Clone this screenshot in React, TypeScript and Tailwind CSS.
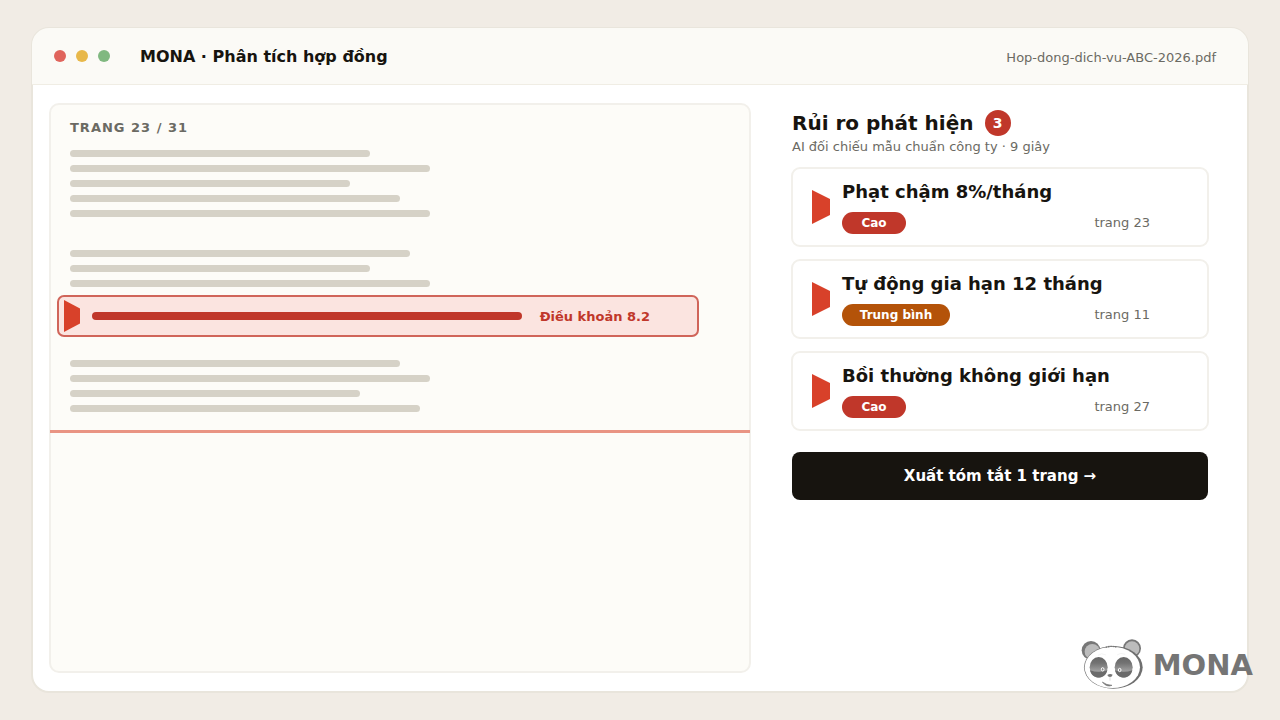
import clsx from "clsx";

type Level = "high" | "medium";

type Risk = {
  title: string;
  level: Level;
  page: number;
};

const risks: Risk[] = [
  { title: "Phạt chậm 8%/tháng", level: "high", page: 23 },
  { title: "Tự động gia hạn 12 tháng", level: "medium", page: 11 },
  { title: "Bồi thường không giới hạn", level: "high", page: 27 },
];

const paragraphs = [
  [300, 360, 280, 330, 360],
  [340, 300, 360],
  [330, 360, 290, 350],
];

function Paragraph({ lines, className }: { lines: number[]; className?: string }) {
  return (
    <div className={clsx("flex flex-col gap-2 px-[19px]", className)}>
      {lines.map((width, i) => (
        <div key={i} className="h-[7px] rounded-full bg-[#d6d2c7]" style={{ width }} />
      ))}
    </div>
  );
}

function Flag({ className }: { className: string }) {
  return (
    <svg viewBox="0 0 18 34" preserveAspectRatio="none" className={className} aria-hidden="true">
      <path d="M0 0 L18 9 V25 L0 34 Z" fill="#d8412a" />
    </svg>
  );
}

function TitleBar() {
  return (
    <header className="-mx-px -mt-px flex h-[57px] items-center rounded-t-[17px] border-b border-[#f0ede4] bg-[#fbfaf6] pr-8 pl-[22px]">
      <div className="flex gap-[10px]">
        <span className="size-3 rounded-full bg-[#e0645c]" />
        <span className="size-3 rounded-full bg-[#e8b84a]" />
        <span className="size-3 rounded-full bg-[#80b880]" />
      </div>
      <h1 className="ml-[30px] pt-[2px] text-base font-bold">MONA · Phân tích hợp đồng</h1>
      <span className="ml-auto pt-[3px] text-[13px] text-[#6b6a63]">Hop-dong-dich-vu-ABC-2026.pdf</span>
    </header>
  );
}

function DocumentPreview() {
  return (
    <section className="rounded-[10px] border-2 border-[#f2f0eb] bg-[#fdfcf8] pt-[13px]">
      <h2 className="px-[19px] text-[13px] leading-5 font-bold tracking-[1px] text-[#6b6a63]">TRANG 23 / 31</h2>
      <Paragraph lines={paragraphs[0]} className="mt-3" />
      <Paragraph lines={paragraphs[1]} className="mt-[33px]" />
      <div className="mt-2 mr-[50px] ml-[6px] flex h-[42px] items-center rounded-[7px] border-2 border-[#d0655a] bg-[#fbe4e0] pr-[47px] pl-[5px]">
        <Flag className="h-8 w-4" />
        <div className="ml-3 h-2 flex-1 rounded-full bg-[#c0372a]" />
        <span className="ml-[18px] pt-[2px] text-[13px] font-bold text-[#c0372a]">Điều khoản 8.2</span>
      </div>
      <Paragraph lines={paragraphs[2]} className="mt-[23px]" />
      <div className="-mx-px mt-[18px] h-[3px] bg-[#e99483]" />
    </section>
  );
}

function LevelBadge({ level }: { level: Level }) {
  return (
    <span
      className={clsx(
        "flex h-[22px] items-center justify-center rounded-full text-xs font-bold text-white",
        level === "high" ? "w-16 bg-[#c0372a]" : "w-[108px] bg-[#b45309]",
      )}
    >
      {level === "high" ? "Cao" : "Trung bình"}
    </span>
  );
}

function RiskCard({ title, level, page }: Risk) {
  return (
    <li className="flex h-20 items-center rounded-[9px] border-2 border-[#f2f0eb] bg-white pr-[57px] pl-[19px]">
      <Flag className="h-[34px] w-[18px]" />
      <div className="ml-3 flex-1">
        <h3 className="text-lg leading-6 font-bold">{title}</h3>
        <div className="mt-2 flex items-center justify-between">
          <LevelBadge level={level} />
          <span className="text-[13px] leading-5 text-[#6b6a63]">trang {page}</span>
        </div>
      </div>
    </li>
  );
}

function RiskPanel() {
  return (
    <aside className="pt-[7px]">
      <div className="flex items-center gap-[11px] pl-px">
        <h2 className="text-xl leading-[26px] font-bold">Rủi ro phát hiện</h2>
        <span className="flex size-[26px] items-center justify-center rounded-full bg-[#c0372a] text-sm font-bold text-white">
          3
        </span>
      </div>
      <p className="mt-px pl-px text-[13px] leading-5 text-[#6b6a63]">AI đối chiếu mẫu chuẩn công ty · 9 giây</p>
      <ul className="mt-[10px] flex flex-col gap-3">
        {risks.map((risk) => (
          <RiskCard key={risk.title} {...risk} />
        ))}
      </ul>
      <div className="mt-[21px] px-px">
        <button type="button" className="h-12 w-full rounded-lg bg-[#17140f] text-[15px] font-bold text-white">
          Xuất tóm tắt 1 trang →
        </button>
      </div>
    </aside>
  );
}

function PandaEye({ cx, pupilX, pupilY }: { cx: number; pupilX: number; pupilY: number }) {
  return (
    <g>
      <ellipse cx={cx} cy="112" rx="27" ry="31" fill="url(#eye)" />
      <path d={`M${cx - 26} 121 Q${cx} 130 ${cx + 26} 121 C${cx + 20} 150 ${cx - 20} 150 ${cx - 26} 121 Z`} fill="#6b6b6b" />
      <ellipse cx={pupilX} cy={pupilY} rx="4" ry="5" fill="#8a8a8a" stroke="#ffffff" strokeWidth="3" />
    </g>
  );
}

function PandaLogo() {
  return (
    <svg viewBox="30 24 195 159" className="h-[53px] w-[65px]" aria-hidden="true">
      <defs>
        <linearGradient id="eye" x1="0" y1="0" x2="0" y2="1">
          <stop offset="0" stopColor="#666666" />
          <stop offset="0.3" stopColor="#737373" />
          <stop offset="0.75" stopColor="#a8a8a8" />
        </linearGradient>
      </defs>
      <ellipse cx="63" cy="61" rx="28" ry="28" fill="#777777" />
      <ellipse cx="67" cy="65" rx="23" ry="23" fill="#bcbcbc" />
      <ellipse cx="186" cy="55" rx="27" ry="27" fill="#777777" />
      <ellipse cx="186" cy="56" rx="22" ry="22" fill="#bcbcbc" />
      <ellipse cx="130" cy="112" rx="88" ry="64" fill="#6f6f6f" />
      <ellipse cx="127" cy="112" rx="83" ry="62" fill="#ffffff" />
      <path d="M107 52 Q123 47 139 51" fill="none" stroke="#777777" strokeWidth="4" strokeDasharray="5 2" />
      <path d="M84 76 Q94 67 108 75 M141 75 Q151 66 166 73" fill="none" stroke="#eeeeee" strokeWidth="2" />
      <PandaEye cx={86} pupilX={98} pupilY={118} />
      <PandaEye cx={161} pupilX={149} pupilY={120} />
      <path d="M112 135 Q120 129 128 134 Q126 141 120 141 Q114 141 112 135 Z" fill="#777777" />
      <path d="M120 141 V152" stroke="#cccccc" strokeWidth="2" />
      <path d="M97 156 Q108 165 126 166 Q110 173 97 156 Z" fill="#777777" stroke="#777777" strokeWidth="2" />
    </svg>
  );
}

export default function App() {
  return (
    <div className="relative flex min-h-screen bg-[#f1ece5] px-[31px] py-[27px] font-['DejaVu_Sans',sans-serif] text-[#17140f]">
      <main className="flex flex-1 flex-col rounded-[18px] border-2 border-[#e9e5dc] bg-white">
        <TitleBar />
        <div className="grid flex-1 grid-cols-[702fr_418fr] gap-10 pt-[18px] pr-[38px] pb-[18px] pl-4">
          <DocumentPreview />
          <RiskPanel />
        </div>
      </main>
      <div className="absolute right-[27px] bottom-[29px] flex items-center gap-2">
        <PandaLogo />
        <span className="text-[29px] leading-[52px] font-bold text-[#757575]">MONA</span>
      </div>
    </div>
  );
}
